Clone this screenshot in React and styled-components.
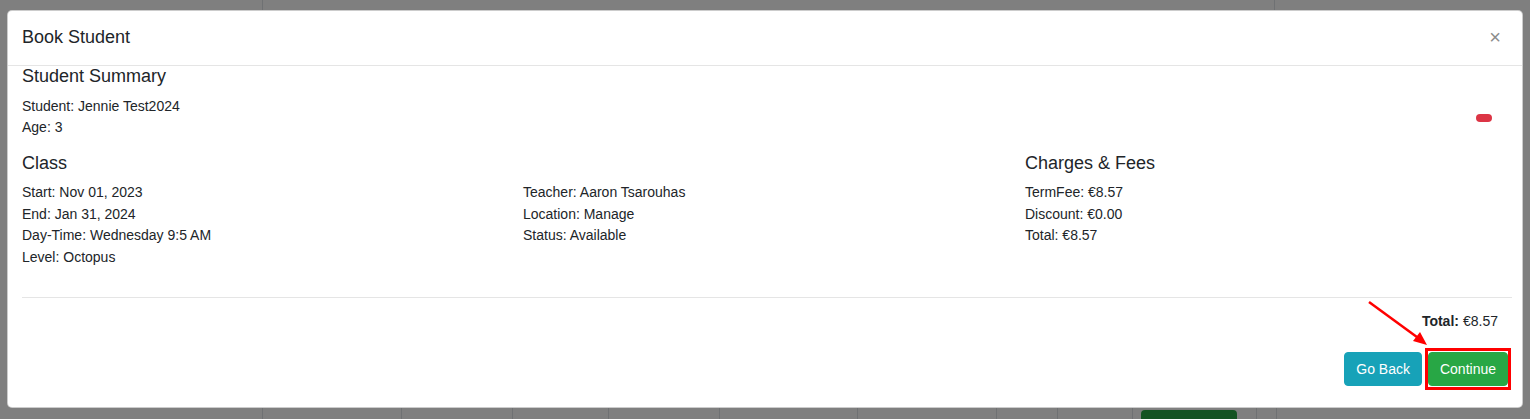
import React from "react";
import styled, { createGlobalStyle } from "styled-components";

const GlobalStyle = createGlobalStyle`
  html, body {
    margin: 0;
    padding: 0;
    height: 419px;
    overflow: hidden;
    font-family: "Liberation Sans", Arial, sans-serif;
    color: #212529;
  }
  * {
    box-sizing: border-box;
  }
`;

const Page = styled.div`
  position: relative;
  width: 1530px;
  height: 419px;
  background: #ffffff;
  display: flex;
  flex-direction: column;
  justify-content: space-between;
  overflow: hidden;
`;

const TableRow = styled.div`
  display: flex;
  height: ${(p) => p.$height}px;
`;

const Cell = styled.div`
  width: ${(p) => (p.$width ? `${p.$width}px` : "auto")};
  flex: ${(p) => (p.$width ? "none" : "1")};
  border-left: ${(p) => (p.$first ? "none" : "1px solid #dee2e6")};
  padding-top: 10px;
  display: flex;
`;

const PageButton = styled.div`
  width: 96px;
  height: 30px;
  margin-left: 8px;
  border-radius: 4px;
  background: #28a745;
`;

const Backdrop = styled.div`
  position: absolute;
  inset: 0;
  background: rgba(0, 0, 0, 0.5);
`;

const Modal = styled.div`
  position: absolute;
  top: 10px;
  left: 7px;
  width: 1516px;
  height: 398px;
  background: #fff;
  border: 1px solid rgba(0, 0, 0, 0.2);
  border-radius: 5px;
  display: flex;
  flex-direction: column;
`;

const Header = styled.div`
  display: flex;
  align-items: center;
  justify-content: space-between;
  padding: 13px 15px 14px 14px;
  border-bottom: 1px solid #e5e5e5;
`;

const Title = styled.h5`
  margin: 0;
  font-size: 18px;
  font-weight: 400;
  line-height: 27px;
`;

const Close = styled.button`
  border: 0;
  background: transparent;
  padding: 0;
  margin-right: 6px;
  font-family: "Liberation Sans", Arial, sans-serif;
  font-size: 20px;
  line-height: 27px;
  color: #8c8c8c;
  cursor: pointer;
`;

const Body = styled.div`
  position: relative;
  flex: 1;
  padding: 0 14px;
  display: flex;
  flex-direction: column;
`;

const SummaryRow = styled.div`
  display: flex;
  justify-content: space-between;
  align-items: flex-start;
`;

const Heading = styled.h4`
  margin: 0 0 8px;
  font-size: 18px;
  font-weight: 400;
  line-height: 21.6px;
  min-height: 21.6px;
`;

const Line = styled.div`
  font-size: 14px;
  line-height: 21.5px;
`;

const Badge = styled.span`
  display: inline-block;
  width: 16px;
  height: 8px;
  margin: 48px 16px 0 0;
  border-radius: 4px;
  background: #dc3545;
`;

const Columns = styled.div`
  display: grid;
  grid-template-columns: 501px 502px 1fr;
  margin-top: 14px;
`;

const Divider = styled.hr`
  margin: 29px -4px 13px 0;
  border: 0;
  border-top: 1px solid #e5e5e5;
`;

const TotalRow = styled.div`
  display: flex;
  justify-content: flex-end;
  padding-right: 10px;
  font-size: 14px;
  line-height: 21.5px;

  & b {
    font-weight: 700;
    margin-right: 4px;
  }
`;

const Actions = styled.div`
  display: flex;
  justify-content: flex-end;
  gap: 6px;
  margin-top: 19px;
`;

const Button = styled.button`
  position: relative;
  height: 34px;
  padding: 0 11px;
  border: 1px solid ${(p) => p.$color};
  border-radius: 4px;
  background: ${(p) => p.$color};
  color: #fff;
  font-family: "Liberation Sans", Arial, sans-serif;
  font-size: 14px;
  cursor: pointer;

  &::after {
    content: "";
    display: ${(p) => (p.$marked ? "block" : "none")};
    position: absolute;
    inset: -5px -4px -5px -4px;
    border: 3px solid #ff0000;
    pointer-events: none;
  }
`;

const Arrow = styled.svg`
  position: absolute;
  left: 1361px;
  top: 236px;
  overflow: visible;
  pointer-events: none;
`;

const classInfo = [
  "Start: Nov 01, 2023",
  "End: Jan 31, 2024",
  "Day-Time: Wednesday 9:5 AM",
  "Level: Octopus",
];

const teacherInfo = ["Teacher: Aaron Tsarouhas", "Location: Manage", "Status: Available"];

const feeInfo = ["TermFee: €8.57", "Discount: €0.00", "Total: €8.57"];

const topCells = [262, 1012];
const bottomCells = [262, 139, 111, 96, 111, 138, 139, 61, 75, 124, 20];

const App = () => {
  return (
    <>
      <GlobalStyle />
      <Page>
        <TableRow $height={200}>
          {topCells.map((w, i) => (
            <Cell key={i} $width={w} $first={i === 0} />
          ))}
          <Cell />
        </TableRow>
        <TableRow $height={19}>
          {bottomCells.map((w, i) => (
            <Cell key={i} $width={w} $first={i === 0}>
              {i === 9 && <PageButton />}
            </Cell>
          ))}
          <Cell />
        </TableRow>
        <Backdrop />
        <Modal>
          <Header>
            <Title>Book Student</Title>
            <Close aria-label="Close">×</Close>
          </Header>
          <Body>
            <SummaryRow>
              <div>
                <Heading>Student Summary</Heading>
                <Line>Student: Jennie Test2024</Line>
                <Line>Age: 3</Line>
              </div>
              <Badge />
            </SummaryRow>
            <Columns>
              <div>
                <Heading>Class</Heading>
                {classInfo.map((t) => (
                  <Line key={t}>{t}</Line>
                ))}
              </div>
              <div>
                <Heading />
                {teacherInfo.map((t) => (
                  <Line key={t}>{t}</Line>
                ))}
              </div>
              <div>
                <Heading>Charges &amp; Fees</Heading>
                {feeInfo.map((t) => (
                  <Line key={t}>{t}</Line>
                ))}
              </div>
            </Columns>
            <Divider />
            <TotalRow>
              <b>Total:</b>€8.57
            </TotalRow>
            <Actions>
              <Button $color="#17a2b8">Go Back</Button>
              <Button $color="#28a745" $marked>
                Continue
              </Button>
            </Actions>
            <Arrow width="60" height="45" viewBox="0 0 60 45">
              <line x1="0" y1="0" x2="52" y2="38" stroke="#ff0000" strokeWidth="2.5" />
              <polygon points="58,43 44,39 51,30" fill="#ff0000" />
            </Arrow>
          </Body>
        </Modal>
      </Page>
    </>
  );
};

export default App;
